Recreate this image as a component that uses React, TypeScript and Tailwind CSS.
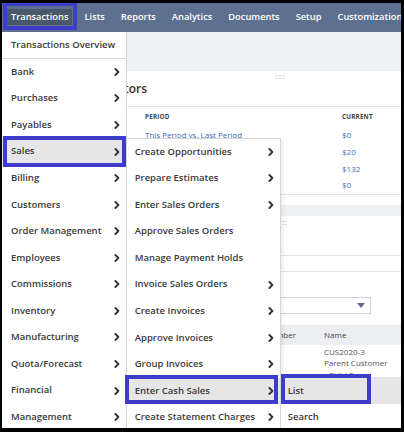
import React from 'react';

const NAV = ['Transactions', 'Lists', 'Reports', 'Analytics', 'Documents', 'Setup', 'Customization'];

const MAIN: { label: string; sub: boolean }[] = [
  { label: 'Transactions Overview', sub: false },
  { label: 'Bank', sub: true },
  { label: 'Purchases', sub: true },
  { label: 'Payables', sub: true },
  { label: 'Sales', sub: true },
  { label: 'Billing', sub: true },
  { label: 'Customers', sub: true },
  { label: 'Order Management', sub: true },
  { label: 'Employees', sub: true },
  { label: 'Commissions', sub: true },
  { label: 'Inventory', sub: true },
  { label: 'Manufacturing', sub: true },
  { label: 'Quota/Forecast', sub: true },
  { label: 'Financial', sub: true },
  { label: 'Management', sub: true },
];

const SALES: { label: string; sub: boolean }[] = [
  { label: 'Create Opportunities', sub: true },
  { label: 'Prepare Estimates', sub: true },
  { label: 'Enter Sales Orders', sub: true },
  { label: 'Approve Sales Orders', sub: false },
  { label: 'Manage Payment Holds', sub: false },
  { label: 'Invoice Sales Orders', sub: true },
  { label: 'Create Invoices', sub: true },
  { label: 'Approve Invoices', sub: true },
  { label: 'Group Invoices', sub: true },
  { label: 'Enter Cash Sales', sub: true },
  { label: 'Create Statement Charges', sub: true },
];

function Chevron() {
  return (
    <svg width="6" height="8" viewBox="0 0 6 8" className="shrink-0">
      <path d="M1.4 1 L4.4 4 L1.4 7" fill="none" stroke="#333" strokeWidth="1.8" strokeLinecap="round" strokeLinejoin="round" />
    </svg>
  );
}

// blue annotation frame drawn over the screenshot
function Mark({ className }: { className: string }) {
  return <div className={`absolute border-4 border-[#3d3dc9] pointer-events-none z-10 ${className}`} />;
}

function Dots() {
  return (
    <div className="grid grid-cols-3 gap-[1.5px]">
      {[...Array(6)].map((_, i) => <span key={i} className="w-[1.5px] h-[1.5px] bg-[#d4d6da]" />)}
    </div>
  );
}

function App() {
  return (
    <div className="w-[404px] h-[432px] bg-black pt-[3px] pl-[2px] pr-[3px] pb-[4px]">
      <div className="relative w-full h-full overflow-hidden bg-[#eef0f3] flex flex-col font-['Open_Sans',sans-serif] text-[#3a3a3a]">
        <nav className="h-[28.5px] shrink-0 bg-[#5e7090] flex items-center pl-[5px] gap-[8px] text-white text-[9.3px] font-semibold whitespace-nowrap">
          {NAV.map((n, i) => (
            <div key={n} className={`relative h-[16px] px-[4px] flex items-center ${i === 0 ? 'bg-[#4a586e]' : ''}`}>
              {n}
              {i === 0 && <Mark className="-left-[4px] -right-[5px] -top-[7px] -bottom-[5px]" />}
            </div>
          ))}
        </nav>

        {/* dashboard behind the menu */}
        <main className="flex-1 pt-[39.5px] flex flex-col gap-[11px]">
          <section className="bg-white h-[134px] shrink-0 flex flex-col">
            <div className="h-[12px] flex items-center pl-[274px]"><Dots /></div>
            <div className="h-[24px] pb-[11px] flex items-center border-b border-[#e3e5e8]">
              <div className="w-[145px] flex justify-end whitespace-nowrap text-[12px] font-semibold text-[#333]">
                <span>Key Performance Indicators</span>
              </div>
            </div>
            <div className="border-b border-[#e3e5e8] pl-[143px] grid grid-cols-[197px_1fr] text-[8px]">
              <div className="h-[20px] flex items-center text-[6.3px] font-bold text-[#444] tracking-[0.2px]">PERIOD</div>
              <div className="h-[20px] flex items-center text-[6.3px] font-bold text-[#444] tracking-[0.2px]">CURRENT</div>
              {['$0', '$20', '$132', '$0'].map((v, i) => (
                <React.Fragment key={i}>
                  <div className="h-[16.7px] flex items-center text-[#3b6db3] whitespace-nowrap">{i === 0 ? 'This Period vs. Last Period' : ''}</div>
                  <div className="h-[16.7px] flex items-center text-[#3b6db3]">{v}</div>
                </React.Fragment>
              ))}
            </div>
          </section>

          <section className="bg-white flex-1 flex flex-col">
            <div className="h-[14px] flex items-center pl-[277px]"><Dots /></div>
            <div className="h-[25px]" />
            <div className="h-[17px] border-y border-[#e3e5e8]" />
            <div className="h-[25px]" />
            <div className="h-[17px] w-[369px] border border-[#cfd3d8] flex items-center justify-end pr-[5px]">
              <svg width="8" height="5" viewBox="0 0 8 5"><path d="M0 0 H8 L4 5 Z" fill="#5b6f8e" /></svg>
            </div>
            <div className="h-[11px]" />
            <div className="h-[20px] bg-[#eceef1] flex items-center text-[8px] text-[#444] whitespace-nowrap">
              <div className="w-[294px] flex justify-end"><span>Number</span></div>
              <div className="pl-[28px]">Name</div>
            </div>
            <div className="pl-[322px] pt-[0.5px] text-[8px] leading-[11.5px] text-[#555] whitespace-nowrap">
              <div>CUS2020-3</div>
              <div>Parent Customer</div>
              <div>: Child 2</div>
            </div>
          </section>
        </main>

        {/* Transactions menu */}
        <div className="absolute left-0 top-[29px] bottom-0 w-[125px] bg-white border-r border-[#d5d7da] text-[9.5px] font-semibold">
          {MAIN.map((m, i) => (
            <div
              key={m.label}
              className={`relative h-[26.57px] flex items-center justify-between pl-[9px] pr-[6px] whitespace-nowrap ${i === 0 ? 'border-b border-[#dcdcdc]' : ''} ${m.label === 'Sales' ? 'bg-[#e6e6e6]' : ''}`}
            >
              <span>{m.label}</span>
              {m.sub && <Chevron />}
              {m.label === 'Sales' && <Mark className="left-[1px] right-0 -top-[2.5px] -bottom-[2.1px]" />}
            </div>
          ))}
        </div>

        {/* Sales submenu */}
        <div className="absolute left-[124px] top-[134.5px] w-[155px] bg-white border border-[#d5d7da] shadow-[2px_2px_4px_rgba(0,0,0,0.08)] text-[9.5px] font-semibold">
          {SALES.map((m) => (
            <div
              key={m.label}
              className={`relative h-[26.57px] flex items-center justify-between pl-[7.7px] pr-[6px] whitespace-nowrap ${m.label === 'Enter Cash Sales' ? 'bg-[#e6e6e6]' : ''}`}
            >
              <span>{m.label}</span>
              {m.sub && <Chevron />}
              {m.label === 'Enter Cash Sales' && <Mark className="-left-[2px] right-[2.3px] -top-[2.5px] bottom-0" />}
            </div>
          ))}
        </div>

        {/* Enter Cash Sales submenu */}
        <div className="absolute left-[279px] top-[374.4px] w-[130px] bg-white text-[9.5px] font-semibold">
          <div className="relative h-[26.57px] flex items-center pl-[6.7px] bg-[#e6e6e6]">
            <span>List</span>
            <Mark className="left-0 w-[90px] -top-[3.4px] -bottom-[0.5px]" />
          </div>
          <div className="h-[26.57px] flex items-center pl-[6.7px]">Search</div>
        </div>
      </div>
    </div>
  );
}

export default App;
